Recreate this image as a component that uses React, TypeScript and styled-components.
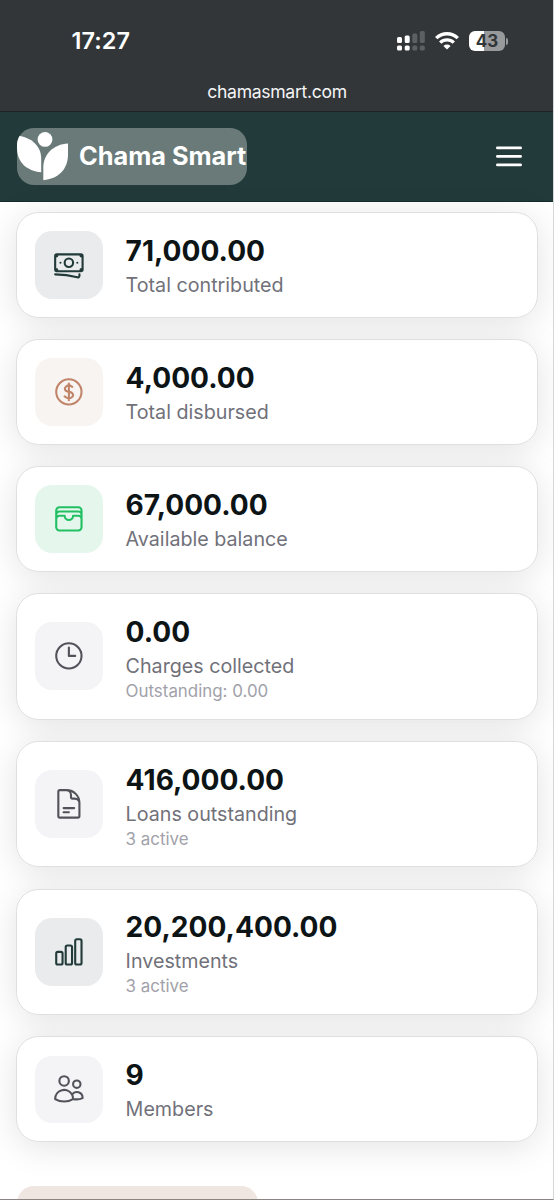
import React from "react";
import styled, { createGlobalStyle } from "styled-components";
import {
  HiOutlineBanknotes,
  HiOutlineCurrencyDollar,
  HiOutlineWallet,
  HiOutlineClock,
  HiOutlineDocumentText,
  HiOutlineChartBar,
  HiOutlineUsers,
} from "react-icons/hi2";
import type { IconType } from "react-icons";

const GlobalStyle = createGlobalStyle`
  * { box-sizing: border-box; }
  body { margin: 0; background: #fff; font-family: Inter, "Liberation Sans", sans-serif; }
`;

const Screen = styled.div`
  display: flex;
  flex-direction: column;
  width: 554px;
  height: 1200px;
  overflow: hidden;
  background: #fff;
  border-right: 1px solid #d5d6d7;
  border-bottom: 1px solid #8a8482;
`;

const BrowserChrome = styled.div`
  flex: none;
  width: 554px;
  height: 112px;
  background: #323639;
  border-bottom: 1px solid #1c2426;
  color: #fff;
`;

const StatusBar = styled.div`
  display: flex;
  align-items: center;
  justify-content: space-between;
  height: 82px;
  padding: 0 46px 0 71.5px;
`;

const Time = styled.span`
  font-size: 23.4px;
  line-height: 28px;
  font-weight: 600;
  letter-spacing: 0.1px;
`;

const Indicators = styled.div`
  display: flex;
  align-items: center;
  gap: 10px;
`;

const Battery = styled.div`
  display: flex;
  align-items: center;
  gap: 1px;
`;

const BatteryBody = styled.div`
  width: 36px;
  height: 20px;
  border-radius: 6px;
  background: linear-gradient(90deg, #fff 43%, #98999b 43%);
  color: #323639;
  font-size: 17px;
  line-height: 20.5px;
  font-weight: 700;
  text-align: center;
`;

const BatteryTip = styled.div`
  width: 2px;
  height: 7px;
  border-radius: 0 3px 3px 0;
  background: #98999b;
`;

const Address = styled.div`
  height: 20px;
  text-align: center;
  font-size: 17.6px;
  line-height: 20px;
  letter-spacing: -0.32px;
  color: #f4f4f5;
`;

const Header = styled.header`
  flex: none;
  display: flex;
  align-items: center;
  justify-content: space-between;
  width: 554px;
  height: 89.6px;
  padding: 0 32px 0 17px;
  background: #223b3a;
  border-bottom: 1px solid #162e2b;
`;

const Brand = styled.div`
  display: flex;
  align-items: center;
  gap: 11px;
  width: 229.5px;
  height: 56.5px;
  border-radius: 17px;
  background: #697a79;
  color: #fff;
  overflow: hidden;
`;

const BrandName = styled.span`
  padding-bottom: 2px;
  font-size: 25.3px;
  font-weight: 700;
  white-space: nowrap;
`;

const MenuButton = styled.button`
  display: flex;
  padding: 0;
  border: 0;
  background: none;
  color: #fff;
`;

const CardList = styled.main`
  flex: none;
  display: flex;
  flex-direction: column;
  gap: 21.1px;
  padding: 10.8px 15.3px 0 16.3px;
`;

const Card = styled.section<{ $tall: boolean }>`
  display: flex;
  align-items: center;
  gap: 23px;
  height: ${(p) => (p.$tall ? 126.8 : 105.7)}px;
  padding: 0 17.8px;
  border: 1.4px solid #dfdfe0;
  border-radius: 22.5px;
  background: #fff;
  position: relative;
`;

const Shade = styled.div`
  border-radius: 22.5px;
  box-shadow: 0 5px 34px rgba(0, 0, 0, 0.115);
`;

const IconTile = styled.div<{ $bg: string; $fg: string }>`
  flex: none;
  display: flex;
  align-items: center;
  justify-content: center;
  width: 67.5px;
  height: 67.5px;
  border-radius: 17px;
  background: ${(p) => p.$bg};
  color: ${(p) => p.$fg};
`;

const Figures = styled.div`
  display: flex;
  flex-direction: column;
  padding-top: 4px;
  white-space: nowrap;
`;

const Value = styled.strong`
  font-size: 28.1px;
  line-height: 35px;
  font-weight: 700;
  color: #0d1416;
`;

const Label = styled.span`
  margin-top: 2px;
  font-size: 19.7px;
  line-height: 29px;
  color: #71717a;
`;

const Note = styled.span`
  margin-top: -1px;
  font-size: 16.9px;
  line-height: 22px;
  color: #a1a1aa;
`;

const NextPanel = styled.div`
  flex: none;
  width: 241px;
  height: 56px;
  margin: 44px 0 0 17px;
  border-radius: 17px;
  background: #f0e6e1;
`;

interface Stat {
  value: string;
  label: string;
  note?: string;
  icon: IconType;
  bg: string;
  fg: string;
}

const stats: Stat[] = [
  { value: "71,000.00", label: "Total contributed", icon: HiOutlineBanknotes, bg: "#e9ebec", fg: "#223b3a" },
  { value: "4,000.00", label: "Total disbursed", icon: HiOutlineCurrencyDollar, bg: "#f8f4f2", fg: "#c08468" },
  { value: "67,000.00", label: "Available balance", icon: HiOutlineWallet, bg: "#e5f7ed", fg: "#22c063" },
  { value: "0.00", label: "Charges collected", note: "Outstanding: 0.00", icon: HiOutlineClock, bg: "#f4f4f6", fg: "#52525b" },
  { value: "416,000.00", label: "Loans outstanding", note: "3 active", icon: HiOutlineDocumentText, bg: "#f4f4f6", fg: "#52525b" },
  { value: "20,200,400.00", label: "Investments", note: "3 active", icon: HiOutlineChartBar, bg: "#e9ebec", fg: "#223b3a" },
  { value: "9", label: "Members", icon: HiOutlineUsers, bg: "#f4f4f6", fg: "#52525b" },
];

const Signal = () => (
  <svg width="28" height="20" viewBox="0 0 28 20" fill="#fff">
    <rect x="0" y="6" width="5" height="6" rx="1.5" />
    <rect x="7.7" y="4.5" width="5" height="7.5" rx="1.5" />
    <rect x="0" y="14.5" width="5" height="5" rx="1.5" />
    <rect x="7.7" y="14.5" width="5" height="5" rx="1.5" />
    <g fill="#5d6063">
      <rect x="15.3" y="2.5" width="5" height="9.5" rx="1.5" />
      <rect x="22.8" y="0" width="5" height="12" rx="1.5" />
      <rect x="15.3" y="14.5" width="5" height="5" rx="1.5" />
      <rect x="22.8" y="14.5" width="5" height="5" rx="1.5" />
    </g>
  </svg>
);

const Wifi = () => (
  <svg width="24" height="18" viewBox="0 0 24 18" fill="none" stroke="#fff" strokeWidth="3.3">
    <path d="M1.2 6.2a15.3 15.3 0 0 1 21.6 0" />
    <path d="M5.2 10.6a9.6 9.6 0 0 1 13.6 0" />
    <path d="M12 17.6 8.4 14a5.2 5.2 0 0 1 7.2 0z" fill="#fff" stroke="none" />
  </svg>
);

const Leaves = () => (
  <svg width="51" height="56" viewBox="0 0 51 56" fill="#fff">
    <circle cx="28" cy="11.4" r="7.4" />
    <path d="M0 7.8C15 9.100 24.200 18.600 24.200 30.600V44.300C9.500 43.100 0 34.100 0 20.100Z" />
    <path d="M51 15.400V26.600C51 41.600 41 51.100 26.300 52.200V39.600C26.300 26.100 36.500 16.100 51 15.400Z" />
  </svg>
);

const Bars = () => (
  <svg width="26" height="21" viewBox="0 0 26 21" fill="none" stroke="#fff" strokeWidth="2.8" strokeLinecap="round">
    <path d="M1.400 1.900h23.200M1.400 10.400h23.200M1.400 18.900h23.200" />
  </svg>
);

export default function App() {
  return (
    <Screen>
      <GlobalStyle />
      <BrowserChrome>
        <StatusBar>
          <Time>17:27</Time>
          <Indicators>
            <Signal />
            <Wifi />
            <Battery>
              <BatteryBody>43</BatteryBody>
              <BatteryTip />
            </Battery>
          </Indicators>
        </StatusBar>
        <Address>chamasmart.com</Address>
      </BrowserChrome>
      <Header>
        <Brand>
          <Leaves />
          <BrandName>Chama Smart</BrandName>
        </Brand>
        <MenuButton aria-label="Menu">
          <Bars />
        </MenuButton>
      </Header>
      <CardList>
        {stats.map(({ value, label, note, icon: Icon, bg, fg }) => (
          <Shade key={label}>
            <Card $tall={Boolean(note)}>
              <IconTile $bg={bg} $fg={fg}>
                <Icon size={33.75} />
              </IconTile>
              <Figures>
                <Value>{value}</Value>
                <Label>{label}</Label>
                {note && <Note>{note}</Note>}
              </Figures>
            </Card>
          </Shade>
        ))}
      </CardList>
      <NextPanel />
    </Screen>
  );
}
